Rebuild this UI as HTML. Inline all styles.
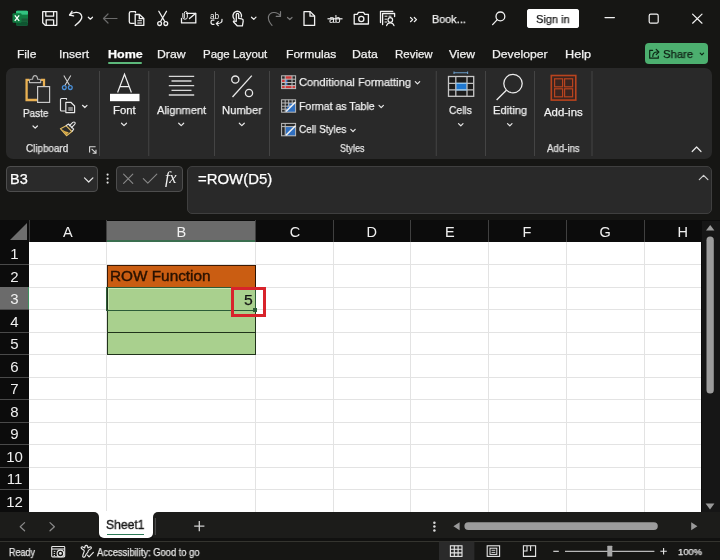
<!DOCTYPE html>
<html><head><meta charset="utf-8">
<style>
*{margin:0;padding:0;box-sizing:border-box}
html,body{width:720px;height:560px;overflow:hidden;background:#161614;font-family:"Liberation Sans",sans-serif;color:#fff}
.a{position:absolute}
.t{position:absolute;white-space:nowrap;line-height:1;transform-origin:0 0;will-change:transform;-webkit-text-stroke:0.25px currentColor}
svg{position:absolute;overflow:visible;will-change:transform}
#grid{position:absolute;left:0;top:220px;width:720px;height:292px;background:#0c0c0c}
.cell{position:absolute;background:#fff}
.vl{position:absolute;width:1px;background:#e3e3e3}
.hl{position:absolute;height:1px;background:#e3e3e3}
.ch{position:absolute;will-change:transform;top:0.5px;height:21px;color:#f0f0f0;font-size:14.5px;text-align:center;line-height:22.5px}
.rh{position:absolute;will-change:transform;left:0;width:29px;color:#f0f0f0;font-size:15px;text-align:center}
</style></head><body>
<!-- TITLE -->
<div class="a" style="left:527px;top:9px;width:52px;height:19px;background:#fff;border-radius:3px"></div>
<svg style="left:0;top:0" width="720" height="40" viewBox="0 0 720 40">
<!-- excel logo -->
<rect x="16" y="10.8" width="12" height="14.8" rx="1.5" fill="#21a366"/>
<rect x="16" y="14.5" width="12" height="3.7" fill="#107c41"/>
<rect x="16" y="18.2" width="12" height="3.7" fill="#185c37"/>
<rect x="16" y="21.9" width="12" height="3.7" rx="1" fill="#0e5530"/>
<rect x="16" y="10.8" width="12" height="3.7" rx="1" fill="#33c481"/>
<rect x="12.5" y="13.2" width="9" height="9.6" rx="1" fill="#107c41"/>
<path d="M14.8 15.4 L19.2 20.8 M19.2 15.4 L14.8 20.8" stroke="#fff" stroke-width="1.3"/>
<g fill="none" stroke="#f2f2f2" stroke-width="1.3" stroke-linejoin="round" stroke-linecap="round">
<!-- save -->
<path d="M42.7 11.7 H56.8 V25.3 H45.2 L42.7 22.8 Z"/>
<path d="M45.8 11.7 V16.2 H53.6 V11.7"/>
<path d="M46.2 25.3 V19.8 H53.6 V25.3"/>
<!-- undo -->
<path d="M69.5 15 L72 11.3 M69.5 15 L73.6 15.8"/>
<path d="M69.8 14.8 C73 11.5 80.8 11 81.8 16.5 C82.4 19.5 79 22.5 75.2 25.6"/>
<!-- chevron -->
<path d="M88.3 17.2 L90.4 19.2 L92.5 17.2" stroke-width="1.2"/>
</g>
<g fill="none" stroke="#6b6b6b" stroke-width="1.2" stroke-linecap="round" stroke-linejoin="round">
<path d="M103.5 18.5 H117 M103.5 18.5 L108 14 M103.5 18.5 L108 23"/>
</g>
<g fill="none" stroke="#f2f2f2" stroke-width="1.3" stroke-linejoin="round" stroke-linecap="round">
<!-- copy -->
<path d="M135.5 12.7 V11.6 H131 Q129.3 11.6 129.3 13.3 V21.7 Q129.3 23.3 131 23.3 H134.2"/>
<path d="M135.2 14.5 H139.5 L143.8 18.5 V25.4 H135.2 Z"/>
<path d="M139.3 14.8 V18.7 H143.5"/>
<path d="M137.8 20.7 H141.5 M137.8 23 H141.5" stroke-width="1"/>
<!-- scissors -->
<path d="M158.8 11.2 L164.6 21.3 M166.5 11.2 L160.7 21.3"/>
<circle cx="159.6" cy="23.6" r="1.9"/>
<circle cx="165.8" cy="23.6" r="1.9"/>
<!-- mail attach -->
<path d="M186.5 13.3 H195.8 V22.9 H181.5 V18.3"/>
<path d="M189.5 18.5 L195.5 13.5"/>
<path d="M184.3 17.8 V13.3 Q184.3 11.5 185.8 11.5 Q187.3 11.5 187.3 13.3 V17.3 Q187.3 19.2 185 19.2 Q182.8 19.2 182.8 17.3 V13.5" stroke-width="1"/>
<!-- touch -->
<path d="M234.2 19.2 Q231.8 16 234 12.8 Q237.5 9.8 240.5 12.8 Q242 14.8 241.3 17"/>
<path d="M236.3 20.5 V14.6 Q236.3 13.3 237.5 13.3 Q238.7 13.3 238.7 14.6 V18.3 L241.8 18.9 Q243.5 19.3 243.2 21.2 L242.4 25.8 H237.2 L233.6 22 Q233 21 234.2 20.8 L236.3 21.5"/>
<!-- chevron -->
<path d="M251.5 17.2 L253.8 19.4 L256 17.2" stroke-width="1.2"/>
</g>
<!-- ab spelling -->
<text x="210" y="18.5" font-family="Liberation Sans" font-size="8.3" fill="#f2f2f2">ab</text>
<g fill="none" stroke="#f2f2f2" stroke-width="1.2" stroke-linejoin="round" stroke-linecap="round">
<path d="M214 20.2 Q211 19.5 211 22.2 Q211 24.8 214 24.4"/>
<path d="M222 19.3 Q222.6 23.8 216.3 23.6 M216.3 23.6 L218.3 21.6 M216.3 23.6 L218.3 25.6"/>
</g>
<g fill="none" stroke="#7a7a7a" stroke-width="1.2" stroke-linecap="round" stroke-linejoin="round">
<!-- redo -->
<path d="M280.5 11.6 V16.3 H276.2"/>
<path d="M280.5 16 C277 11 270 11.5 268.5 16.5 C267.8 19.5 269.5 22.5 272 25.3"/>
<path d="M287.5 17.5 L289.8 19.5 L292 17.5"/>
</g>
<g fill="none" stroke="#f2f2f2" stroke-width="1.3" stroke-linejoin="round" stroke-linecap="round">
<!-- new doc -->
<path d="M304 11.6 H310.2 L314.6 16 V25.4 H304 Z"/>
<path d="M310 11.8 V16.2 H314.4"/>
<!-- camera -->
<path d="M354.2 14.4 H357.2 L358.5 12.4 H363.5 L364.8 14.4 H368.4 V24 H354.2 Z"/>
<circle cx="361.3" cy="19" r="2.6"/>
<!-- report -->
<path d="M380.5 22.5 V11.3 H392.8"/>
<path d="M382.6 24.6 V13.5 H394.6 V16.5"/>
<path d="M385 16.2 H387 M389 16.2 H391 M385 19.2 H386.8 M385 22 H386.8" stroke-width="1"/>
<circle cx="390.3" cy="20" r="2.3" stroke-width="1.2"/>
<path d="M386.6 25.6 Q387.5 22.8 390.3 22.8 Q393 22.8 394 25.6" stroke-width="1.2"/>
<!-- >> -->
<path d="M410.5 17.5 L412.7 19.6 L410.5 21.7 M414.3 17.5 L416.5 19.6 L414.3 21.7" stroke-width="1.2"/>
<!-- search -->
<circle cx="500.4" cy="16.4" r="4.4"/>
<path d="M497.3 19.6 L492.6 24.6"/>
<!-- window controls -->
<path d="M605 17.6 H614.4" stroke-width="1.2"/>
<rect x="649.2" y="14.2" width="9" height="9" rx="1.5" stroke-width="1.2"/>
<path d="M692.6 14.1 L702 23.2 M702 14.1 L692.6 23.2" stroke-width="1.2"/>
</g>
<!-- strike ab -->
<text x="329" y="22.8" font-family="Liberation Sans" font-size="10.5" fill="#f2f2f2">ab</text>
<path d="M327.5 18.8 H342.5" stroke="#f2f2f2" stroke-width="1.2"/>
</svg>
<div class="a" style="left:527px;top:9px;width:52px;height:19px;background:#fff;border-radius:3px"></div>

<div class="t" style="left:431.63px;top:14.09px;font-size:11.3px;color:#f0f0f0;font-weight:normal;transform:scaleX(0.96);">Book...</div>
<div class="t" style="left:535.95px;top:14.09px;font-size:11.3px;color:#1a1a1a;font-weight:normal;transform:scaleX(0.978);">Sign in</div>
<!-- TABS -->
<div class="t" style="left:17.23px;top:49.07px;font-size:11.45px;color:#f0f0f0;font-weight:normal;transform:scaleX(1.055);">File</div><div class="t" style="left:59.32px;top:49.07px;font-size:11.45px;color:#f0f0f0;font-weight:normal;transform:scaleX(1.052);">Insert</div><div class="t" style="left:107.52px;top:49.07px;font-size:11.45px;color:#ffffff;font-weight:bold;transform:scaleX(1.093);">Home</div><div class="t" style="left:157.42px;top:49.07px;font-size:11.45px;color:#f0f0f0;font-weight:normal;transform:scaleX(1.067);">Draw</div><div class="t" style="left:203.48px;top:49.07px;font-size:11.45px;color:#f0f0f0;font-weight:normal;transform:scaleX(1.001);">Page Layout</div><div class="t" style="left:286.03px;top:49.07px;font-size:11.45px;color:#f0f0f0;font-weight:normal;transform:scaleX(1.057);">Formulas</div><div class="t" style="left:352.32px;top:49.07px;font-size:11.45px;color:#f0f0f0;font-weight:normal;transform:scaleX(1.071);">Data</div><div class="t" style="left:394.58px;top:49.07px;font-size:11.45px;color:#f0f0f0;font-weight:normal;transform:scaleX(1.002);">Review</div><div class="t" style="left:448.88px;top:49.07px;font-size:11.45px;color:#f0f0f0;font-weight:normal;transform:scaleX(1.061);">View</div><div class="t" style="left:492.32px;top:49.07px;font-size:11.45px;color:#f0f0f0;font-weight:normal;transform:scaleX(1.067);">Developer</div><div class="t" style="left:565.18px;top:49.07px;font-size:11.45px;color:#f0f0f0;font-weight:normal;transform:scaleX(1.109);">Help</div>
<div class="a" style="left:108px;top:62px;width:34px;height:2px;background:#5cb87a;border-radius:1px"></div>
<div class="a" style="left:645px;top:42.8px;width:63px;height:21.6px;background:#4caf6f;border-radius:4px"></div>
<div class="t" style="left:663.44px;top:48.54px;font-size:11.59px;color:#0f1f14;font-weight:normal;transform:scaleX(0.973);">Share</div>
<svg style="left:0;top:40px" width="720" height="30" viewBox="0 40 720 30">
<g fill="none" stroke="#0c2815" stroke-width="1.2" stroke-linecap="round" stroke-linejoin="round">
<path d="M652.6 50.4 H649.7 V58.2 H658.3 V56"/>
<path d="M652.8 56.4 Q652.8 52 657.2 52 H658.6"/>
<path d="M656.2 49.4 L658.8 52 L656.2 54.6"/>
<path d="M700.2 53.2 L701.9 54.9 L703.6 53.2"/>
</g>
</svg>
<!-- RIBBON -->
<div class="a" style="left:6px;top:68px;width:706px;height:91px;background:#292929;border-radius:7px"></div>
<svg style="left:0;top:60px" width="720" height="110" viewBox="0 60 720 110">
<!-- separators -->
<g stroke="#444" stroke-width="1">
<path d="M99.5 71 V156 M148.75 71 V156 M214.5 71 V156 M269.5 71 V156 M436.25 71 V156 M485.5 71 V156 M534.5 71 V156 M592 71 V156"/>
</g>
<!-- paste -->
<path d="M29.6 79.9 H26.6 V100 H37.4 M40.6 79.9 H44 V86.2" fill="none" stroke="#e9b153" stroke-width="2.3"/>
<path d="M29.5 82.6 V80.6 Q29.5 79.2 31 79.2 H32.6 Q32.9 75.6 35.1 75.6 Q37.3 75.6 37.6 79.2 H39.2 Q40.7 79.2 40.7 80.6 V82.6 Z" fill="#2b2b2b" stroke="#b8b8b8" stroke-width="1.1" stroke-linejoin="round"/>
<rect x="37.6" y="86.6" width="12" height="15.8" fill="#2b2b2b" stroke="#c9c9c9" stroke-width="1.2"/>
<g fill="none" stroke="#e8e8e8" stroke-width="1.2" stroke-linecap="round" stroke-linejoin="round">
<path d="M33 126 L35.2 128.2 L37.4 126"/>
<!-- copy -->
<path d="M66.5 99.2 V98.5 H61.5 Q60.5 98.5 60.5 99.5 V110 Q60.5 111 61.5 111 H64.8"/>
<path d="M65.8 102.3 H70.8 L74.6 106 V112.6 H65.8 Z"/>
<path d="M82.5 105.3 L84.8 107.5 L87 105.3"/>
<!-- font chevron etc -->
<path d="M121.5 123.2 L124 125.6 L126.5 123.2"/>
<path d="M178.7 123.2 L181.2 125.6 L183.7 123.2"/>
<path d="M239.3 123.2 L241.8 125.6 L244.3 123.2"/>
<path d="M458.5 123.6 L460.8 125.8 L463 123.6"/>
<path d="M507.5 123.6 L509.8 125.8 L512 123.6"/>
<path d="M415.3 81.6 L417.5 83.8 L419.7 81.6"/>
<path d="M379 105.4 L381.2 107.6 L383.4 105.4"/>
<path d="M350.8 129.4 L353 131.6 L355.2 129.4"/>
<path d="M692.2 151.5 L696.6 147 L701 151.5"/>
</g>
<rect x="68.3" y="107" width="4.5" height="4" fill="#8a8a8a"/>
<!-- scissors -->
<path d="M63.8 75.5 L69.5 85.2 M70.8 75.5 L65 85.2" stroke="#d0d0d0" stroke-width="1.1" fill="none"/>
<circle cx="64.3" cy="87.6" r="1.9" fill="none" stroke="#4a90d9" stroke-width="1.3"/>
<circle cx="70.3" cy="87.6" r="1.9" fill="none" stroke="#4a90d9" stroke-width="1.3"/>
<!-- format painter -->
<path d="M60.4 128.7 L66.2 125.8 L71.9 131.5 L66.5 135.7 Z" fill="#2b2b2b" stroke="#e3bd63" stroke-width="1.1" stroke-linejoin="round"/>
<path d="M61.2 129 L65 131.2 L68.8 132.3 L66.4 135 Z" fill="#dcae48"/>
<path d="M65.8 125.7 L68.5 124 L73.7 129.2 L71.9 131.6" fill="none" stroke="#e6e6e6" stroke-width="1.1" stroke-linejoin="round"/>
<path d="M69 126.2 L72.8 122.4 Q74 121.5 74.9 122.4 Q75.7 123.4 74.7 124.4 L71 128.2" fill="none" stroke="#e6e6e6" stroke-width="1.1" stroke-linejoin="round"/>
<!-- launcher -->
<path d="M89.6 152.6 V146.8 H95.6 M91.6 148.8 L96 153.2 M96 149.8 V153.2 H92.6" fill="none" stroke="#d8d8d8" stroke-width="1.1"/>
<!-- Font A -->
<path d="M117.6 92.5 L124.5 74.2 L131.4 92.5 M119.8 86.6 H129.2" fill="none" stroke="#f0f0f0" stroke-width="1.2"/>
<rect x="110" y="93.8" width="29.5" height="7.4" fill="#fff"/>
<!-- alignment -->
<g stroke="#d8d8d8" stroke-width="1.3">
<path d="M168.8 76.3 H194.2 M171.5 81 H191.5 M168.8 85.6 H194.2 M171.5 90.3 H191.5 M168.8 95 H194.2"/>
</g>
<!-- percent -->
<g fill="none" stroke="#e8e8e8" stroke-width="1.3">
<circle cx="235.3" cy="79.6" r="3.6"/>
<circle cx="249" cy="93" r="3.6"/>
<path d="M251.8 75.6 L232.5 97"/>
</g>
<!-- CF icon -->
<rect x="281.6" y="75.8" width="14" height="12.8" fill="#2b2b2b"/>
<rect x="285.2" y="75.8" width="6.8" height="3.4" fill="#d03838"/>
<rect x="281.6" y="85.6" width="14" height="3" fill="#d03838"/>
<rect x="281.6" y="79.2" width="3.6" height="3.3" fill="#d03838"/>
<rect x="285.2" y="79.2" width="2.2" height="6.4" fill="#4a7fd0"/>
<g fill="none" stroke="#bdbdbd" stroke-width="1">
<rect x="281.6" y="75.8" width="14" height="12.8"/>
<path d="M281.6 79.2 H295.6 M281.6 82.5 H295.6 M281.6 85.6 H295.6 M285.2 75.8 V88.6 M292 75.8 V88.6"/>
</g>
<!-- FaT icon -->
<path d="M288.7 103 H295.6 V112 H285 Z" fill="#2f6fc0"/>
<g fill="none" stroke="#bcbcbc" stroke-width="1">
<rect x="281.6" y="99.8" width="14" height="12.4"/>
<path d="M281.6 103 H295.6 M281.6 106.2 H292 M281.6 109.2 H287 M285.2 99.8 V112.2 M288.7 99.8 V106 M292.2 99.8 V104"/>
</g>
<path d="M286 111.5 L295.5 102" stroke="#f0f0f0" stroke-width="1.6"/>
<!-- CS icon -->
<path d="M285.2 126.6 H295.6 V136 H285.2 Z" fill="#2f6fc0"/>
<g fill="none" stroke="#bcbcbc" stroke-width="1">
<rect x="281.6" y="123.4" width="14" height="12.4"/>
<path d="M281.6 126.6 H295.6 M285.2 123.4 V135.8"/>
</g>
<path d="M286 135.2 L295.5 125.7" stroke="#f0f0f0" stroke-width="1.6"/>
<!-- cells -->
<path d="M454 72.8 H467.6 M454 71.6 V74 M467.6 71.6 V74" stroke="#6a9cc8" stroke-width="1.1"/>
<rect x="448.5" y="76.5" width="25.2" height="19.8" fill="#1c1c1c" stroke="#c8c8c8" stroke-width="1.3"/>
<rect x="455.8" y="83.3" width="11.2" height="6.5" fill="#1f78d0"/>
<path d="M448.5 83.3 H473.7 M448.5 89.8 H473.7 M455.8 76.5 V96.3 M467 76.5 V96.3" stroke="#c0c0c0" stroke-width="1.3"/><path d="M455.8 83.3 H467 M455.8 89.8 H467" stroke="#8cc4f0" stroke-width="1.3"/>
<!-- editing -->
<circle cx="513" cy="83.6" r="9.2" fill="none" stroke="#ececec" stroke-width="1.3"/>
<path d="M506.4 90.3 L496.6 100" stroke="#ececec" stroke-width="1.3"/>
<!-- add-ins -->
<rect x="551.3" y="75.5" width="24.5" height="24.6" fill="#3a2520" stroke="#b8441f" stroke-width="1.6"/>
<g fill="none" stroke="#b8441f" stroke-width="1.2">
<rect x="554.6" y="78.8" width="8" height="8"/>
<rect x="564.6" y="78.8" width="8" height="8"/>
<rect x="554.6" y="88.8" width="8" height="8"/>
<rect x="564.6" y="88.8" width="8" height="8"/>
</g>
</svg>

<div class="t" style="left:22.81px;top:107.91px;font-size:10.58px;color:#f0f0f0;font-weight:normal;transform:scaleX(0.937);">Paste</div><div class="t" style="left:26.31px;top:144.18px;font-size:10.14px;color:#e6e6e6;font-weight:normal;transform:scaleX(0.974);">Clipboard</div><div class="t" style="left:112.84px;top:104.69px;font-size:11.3px;color:#f0f0f0;font-weight:normal;transform:scaleX(1.007);">Font</div><div class="t" style="left:157.0px;top:104.69px;font-size:11.3px;color:#f0f0f0;font-weight:normal;transform:scaleX(0.981);">Alignment</div><div class="t" style="left:221.6px;top:104.69px;font-size:11.3px;color:#f0f0f0;font-weight:normal;transform:scaleX(0.991);">Number</div><div class="t" style="left:298.94px;top:76.64px;font-size:11.59px;color:#f0f0f0;font-weight:normal;transform:scaleX(0.962);">Conditional Formatting</div><div class="t" style="left:299.05px;top:100.64px;font-size:11.59px;color:#f0f0f0;font-weight:normal;transform:scaleX(0.914);">Format as Table</div><div class="t" style="left:299.4px;top:124.14px;font-size:11.59px;color:#f0f0f0;font-weight:normal;transform:scaleX(0.864);">Cell Styles</div><div class="t" style="left:340.3px;top:144.18px;font-size:10.14px;color:#e6e6e6;font-weight:normal;transform:scaleX(0.887);">Styles</div><div class="t" style="left:449.49px;top:104.69px;font-size:11.3px;color:#f0f0f0;font-weight:normal;transform:scaleX(0.909);">Cells</div><div class="t" style="left:492.86px;top:104.69px;font-size:11.3px;color:#f0f0f0;font-weight:normal;transform:scaleX(0.988);">Editing</div><div class="t" style="left:543.75px;top:106.51px;font-size:11.16px;color:#f0f0f0;font-weight:normal;transform:scaleX(1.023);">Add-ins</div><div class="t" style="left:547.0px;top:144.18px;font-size:10.14px;color:#e6e6e6;font-weight:normal;transform:scaleX(0.949);">Add-ins</div>
<!-- FORMULA BAR -->
<div class="a" style="left:6px;top:166px;width:92px;height:26px;background:#2a2a2a;border:1px solid #4d4d4d;border-radius:4px"></div>
<div class="t" style="left:9.94px;top:171.98px;font-size:14.49px;color:#ffffff;font-weight:normal;transform:scaleX(0.997);">B3</div>
<div class="a" style="left:116px;top:166px;width:67px;height:26px;background:#2a2a2a;border:1px solid #4d4d4d;border-radius:4px"></div>
<div class="a" style="left:187px;top:166px;width:525px;height:48px;background:#292929;border:1px solid #3f3f3f;border-radius:5px"></div>
<div class="t" style="left:197.95px;top:172.28px;font-size:14.49px;color:#ffffff;font-weight:normal;transform:scaleX(1.031);">=ROW(D5)</div>
<svg style="left:0;top:160px" width="720" height="60" viewBox="0 160 720 60">
<g fill="none" stroke="#e6e6e6" stroke-width="1.2" stroke-linecap="round" stroke-linejoin="round">
<path d="M84.5 177.8 L88.7 182 L92.9 177.8"/>
<path d="M699.3 179.6 L703.6 175.3 L707.9 179.6" stroke="#d0d0d0"/>
</g>
<g fill="#e0e0e0"><circle cx="107.6" cy="174.6" r="1.1"/><circle cx="107.6" cy="178.6" r="1.1"/><circle cx="107.6" cy="182.6" r="1.1"/></g>
<g fill="none" stroke="#8a8a8a" stroke-width="1.1" stroke-linecap="round" stroke-linejoin="round">
<path d="M123.6 174.2 L132.8 183.4 M132.8 174.2 L123.6 183.4"/>
<path d="M143.3 178.6 L147.8 183.1 L156.8 174.2"/>
</g>
<text x="165" y="183.4" font-family="Liberation Serif" font-style="italic" font-size="16.5" fill="#f0f0f0" letter-spacing="-0.3">fx</text>
</svg>

<!-- GRID -->
<div id="grid">
<div class="cell" style="left:29px;top:22.30000000000001px;width:671.5px;height:269.7px"></div>
<div class="vl" style="left:106.30px;top:22.30000000000001px;height:269.7px"></div>
<div class="vl" style="left:255.00px;top:22.30000000000001px;height:269.7px"></div>
<div class="vl" style="left:332.75px;top:22.30000000000001px;height:269.7px"></div>
<div class="vl" style="left:410.25px;top:22.30000000000001px;height:269.7px"></div>
<div class="vl" style="left:487.75px;top:22.30000000000001px;height:269.7px"></div>
<div class="vl" style="left:565.75px;top:22.30000000000001px;height:269.7px"></div>
<div class="vl" style="left:643.90px;top:22.30000000000001px;height:269.7px"></div>
<div class="hl" style="left:29px;top:44.28px;width:671.5px"></div>
<div class="hl" style="left:29px;top:66.76px;width:671.5px"></div>
<div class="hl" style="left:29px;top:89.24px;width:671.5px"></div>
<div class="hl" style="left:29px;top:111.72px;width:671.5px"></div>
<div class="hl" style="left:29px;top:134.20px;width:671.5px"></div>
<div class="hl" style="left:29px;top:156.68px;width:671.5px"></div>
<div class="hl" style="left:29px;top:179.16px;width:671.5px"></div>
<div class="hl" style="left:29px;top:201.64px;width:671.5px"></div>
<div class="hl" style="left:29px;top:224.12px;width:671.5px"></div>
<div class="hl" style="left:29px;top:246.60px;width:671.5px"></div>
<div class="hl" style="left:29px;top:269.08px;width:671.5px"></div>
<div class="hl" style="left:29px;top:291.56px;width:671.5px"></div>
<div class="ch" style="left:29.00px;width:77.80px;">A</div>
<div class="ch" style="left:106.80px;width:148.70px;background:#6b6b6b;">B</div>
<div class="a" style="left:106.30px;top:0;width:1px;height:21.5px;background:#404040"></div>
<div class="ch" style="left:255.50px;width:77.75px;">C</div>
<div class="a" style="left:255.00px;top:0;width:1px;height:21.5px;background:#404040"></div>
<div class="ch" style="left:333.25px;width:77.50px;">D</div>
<div class="a" style="left:332.75px;top:0;width:1px;height:21.5px;background:#404040"></div>
<div class="ch" style="left:410.75px;width:77.50px;">E</div>
<div class="a" style="left:410.25px;top:0;width:1px;height:21.5px;background:#404040"></div>
<div class="ch" style="left:488.25px;width:78.00px;">F</div>
<div class="a" style="left:487.75px;top:0;width:1px;height:21.5px;background:#404040"></div>
<div class="ch" style="left:566.25px;width:78.15px;">G</div>
<div class="a" style="left:565.75px;top:0;width:1px;height:21.5px;background:#404040"></div>
<div class="ch" style="left:644.40px;width:77.60px;">H</div>
<div class="a" style="left:643.90px;top:0;width:1px;height:21.5px;background:#404040"></div>
<div class="a" style="left:106.8px;top:20px;width:148.7px;height:2px;background:#3a6e4f"></div>
<svg style="left:0;top:0" width="29" height="22"><polygon points="27,3 27,20 10,20" fill="#6e6e6e"/></svg>
<div class="a" style="left:28.5px;top:0;width:1px;height:22px;background:#3a3a3a"></div>
<div class="rh" style="top:22.30px;height:22.48px;line-height:23.68px;">1</div>
<div class="a" style="left:0;top:44.28px;width:29px;height:1px;background:#4a4a4a"></div>
<div class="rh" style="top:44.78px;height:22.48px;line-height:23.68px;">2</div>
<div class="a" style="left:0;top:66.76px;width:29px;height:1px;background:#4a4a4a"></div>
<div class="rh" style="top:67.26px;height:22.48px;line-height:23.68px;background:#6b6b6b;">3</div>
<div class="a" style="left:0;top:89.24px;width:29px;height:1px;background:#4a4a4a"></div>
<div class="rh" style="top:89.74px;height:22.48px;line-height:23.68px;">4</div>
<div class="a" style="left:0;top:111.72px;width:29px;height:1px;background:#4a4a4a"></div>
<div class="rh" style="top:112.22px;height:22.48px;line-height:23.68px;">5</div>
<div class="a" style="left:0;top:134.20px;width:29px;height:1px;background:#4a4a4a"></div>
<div class="rh" style="top:134.70px;height:22.48px;line-height:23.68px;">6</div>
<div class="a" style="left:0;top:156.68px;width:29px;height:1px;background:#4a4a4a"></div>
<div class="rh" style="top:157.18px;height:22.48px;line-height:23.68px;">7</div>
<div class="a" style="left:0;top:179.16px;width:29px;height:1px;background:#4a4a4a"></div>
<div class="rh" style="top:179.66px;height:22.48px;line-height:23.68px;">8</div>
<div class="a" style="left:0;top:201.64px;width:29px;height:1px;background:#4a4a4a"></div>
<div class="rh" style="top:202.14px;height:22.48px;line-height:23.68px;">9</div>
<div class="a" style="left:0;top:224.12px;width:29px;height:1px;background:#4a4a4a"></div>
<div class="rh" style="top:224.62px;height:22.48px;line-height:23.68px;">10</div>
<div class="a" style="left:0;top:246.60px;width:29px;height:1px;background:#4a4a4a"></div>
<div class="rh" style="top:247.10px;height:22.48px;line-height:23.68px;">11</div>
<div class="a" style="left:0;top:269.08px;width:29px;height:1px;background:#4a4a4a"></div>
<div class="rh" style="top:269.58px;height:22.48px;line-height:23.68px;">12</div>
<div class="a" style="left:0;top:291.56px;width:29px;height:1px;background:#4a4a4a"></div>
<div class="a" style="left:27.6px;top:66.8px;width:1.6px;height:22.6px;background:#3f8f5f"></div>

</div>
<!-- B2 orange -->
<div class="a" style="left:106.8px;top:264.8px;width:149px;height:22.6px;background:#ca5d12;border-top:1px solid #3b1a05;border-left:1px solid #3b1a05;border-right:1px solid #2a1203"></div>
<!-- B3:B5 green -->
<div class="a" style="left:106.8px;top:287.2px;width:149px;height:67.6px;background:#a9d08e;border:1px solid #20331a"></div>
<div class="a" style="left:106.8px;top:331.7px;width:149px;height:1px;background:#20331a"></div>
<!-- selection B3 -->
<div class="a" style="left:106.2px;top:286.6px;width:150.2px;height:24px;border:1.3px solid #2c5c38"></div>
<div class="a" style="left:107.5px;top:287.9px;width:147.6px;height:21.4px;border:1px solid rgba(225,250,215,0.55);border-right:none;border-bottom:none"></div>
<div class="a" style="left:253.3px;top:308px;width:4px;height:3.6px;background:#2c5c38"></div>
<!-- red box -->
<div class="a" style="left:231px;top:286.5px;width:35px;height:30.5px;border:3px solid #d8232b"></div>

<div class="t" style="left:109.57px;top:270.47px;font-size:13.91px;color:#2a1200;font-weight:normal;transform:scaleX(1.103);-webkit-text-stroke:0.4px currentColor;">ROW Function</div><div class="t" style="left:243.97px;top:291.67px;font-size:15.22px;color:#111111;font-weight:normal;transform:scaleX(1.035);">5</div>
<!-- SHEET TABS -->
<div class="a" style="left:0;top:512px;width:720px;height:29px;background:#111110"></div>
<div class="a" style="left:90px;top:511px;width:72px;height:10px;background:#fff"></div>
<div class="a" style="left:0;top:511.8px;width:99px;height:26.5px;background:#1c1c1a;border-radius:0 5px 0 0"></div>
<div class="a" style="left:152.5px;top:511.8px;width:568px;height:26.5px;background:#1c1c1a;border-radius:5px 0 0 0"></div>
<div class="a" style="left:0;top:540.5px;width:720px;height:19.5px;background:#161614;border-top:1px solid #34342f"></div>
<div class="a" style="left:99px;top:511px;width:53.5px;height:27px;background:#fff;border-radius:0 0 5px 5px"></div>
<div class="t" style="left:106.09px;top:517.91px;font-size:13.04px;color:#1a1a1a;font-weight:normal;transform:scaleX(0.931);-webkit-text-stroke:0.4px currentColor;">Sheet1</div>
<div class="a" style="left:106.8px;top:533.6px;width:37.5px;height:1.8px;background:#2a7a56"></div>
<!-- vertical scrollbar -->
<svg style="left:0;top:0" width="720" height="560" viewBox="0 0 720 560">
<rect x="702" y="221" width="18" height="291" fill="#161616"/>
<path d="M706 230.6 L710.2 225 L714.4 230.6 Z" fill="#9a9a9a"/>
<path d="M705.6 503.4 L710 509.4 L714.4 503.4 Z" fill="#9a9a9a"/>
<rect x="706.5" y="236.6" width="7.3" height="157" rx="3.6" fill="#9c9c9c"/>
<!-- sheet nav -->
<g fill="none" stroke="#8a8a8a" stroke-width="1.2" stroke-linecap="round" stroke-linejoin="round">
<path d="M24.6 522.6 L20.2 526.7 L24.6 530.8"/>
<path d="M50 522.6 L54.4 526.7 L50 530.8"/>
</g>
<path d="M155.3 518 V535" stroke="#555" stroke-width="1"/>
<path d="M199.3 521 V531.3 M194.2 526.2 H204.4" stroke="#d0d0d0" stroke-width="1.3"/>
<g fill="#d8d8d8"><circle cx="434.4" cy="522.8" r="1.25"/><circle cx="434.4" cy="526.6" r="1.25"/><circle cx="434.4" cy="530.4" r="1.25"/></g>
<path d="M453.4 526.2 L459.6 522.2 V530.2 Z" fill="#9a9a9a"/>
<path d="M697.4 526.2 L691.2 522.2 V530.2 Z" fill="#9a9a9a"/>
<rect x="464.4" y="522.2" width="193.4" height="7.8" rx="3.9" fill="#9c9c9c"/>
<!-- status icons -->
<rect x="439" y="541.5" width="35.4" height="18.5" fill="#2a2a2a"/>
<g fill="none" stroke="#e8e8e8" stroke-width="1.1">
<rect x="450.4" y="545.8" width="11.6" height="10.6"/>
<path d="M454.3 545.8 V556.4 M458.1 545.8 V556.4 M450.4 549.3 H462 M450.4 552.9 H462"/>
<rect x="487.2" y="545.8" width="12.4" height="10.6"/>
<rect x="490" y="548.2" width="6.8" height="6.2" stroke-width="1"/>
<path d="M491.5 550.3 H495.3 M491.5 552.4 H495.3" stroke-width="0.9"/>
<path d="M523.4 545.8 H535.6 V556.4 H523.4 Z M527 545.8 V551 H523.4 M530.6 545.8 V551"/>
<path d="M553.3 551.3 H558.8"/>
<path d="M565 551.4 H654.4" stroke="#b8b8b8"/>
<path d="M660.4 551.3 H666.8 M663.6 548 V554.6"/>
<!-- macro icon -->
<rect x="51.7" y="546.5" width="13" height="10.4" rx="0.8"/>
<path d="M51.7 549 H64.7"/>
<path d="M53.7 551.4 H55.4 M53.7 553.5 H55 M53.7 555.5 H55" stroke-width="0.9"/>
<!-- accessibility icon -->
<path d="M81.5 548.6 Q80.6 547 82.3 546.8 L84.7 547.9 Q84.8 545.4 86.3 545.4 Q87.8 545.4 87.9 547.9 L90.3 546.8 Q92 547 91 548.6 L88.4 550.4 L87.8 552.4 Q86 553.8 85.3 556 Q84.7 557.6 83.3 557.1 Q82.3 556.6 83 554.6 L84.3 551.1 Q84 550.1 83.5 549.9 Z" stroke-width="1.15" stroke-linejoin="round"/>
<path d="M87.4 555.2 L89.1 556.9 L93.4 552.4" stroke-width="1.15" stroke-linecap="round" stroke-linejoin="round"/>
</g>
<circle cx="60.4" cy="553.4" r="3.3" fill="#161614" stroke="#e8e8e8" stroke-width="1.15"/><circle cx="60.4" cy="553.4" r="1.4" fill="#e8e8e8"/>
<rect x="607.3" y="545.8" width="5" height="10.8" rx="0.5" fill="#a8a8a8"/>
</svg>

<div class="t" style="left:8.78px;top:548.0px;font-size:10.0px;color:#e6e6e6;font-weight:normal;transform:scaleX(0.897);">Ready</div><div class="t" style="left:97.0px;top:548.0px;font-size:10.0px;color:#e6e6e6;font-weight:normal;transform:scaleX(0.937);">Accessibility: Good to go</div><div class="t" style="left:678.15px;top:547.05px;font-size:9.71px;color:#e6e6e6;font-weight:normal;transform:scaleX(0.967);">100%</div>
</body></html>
